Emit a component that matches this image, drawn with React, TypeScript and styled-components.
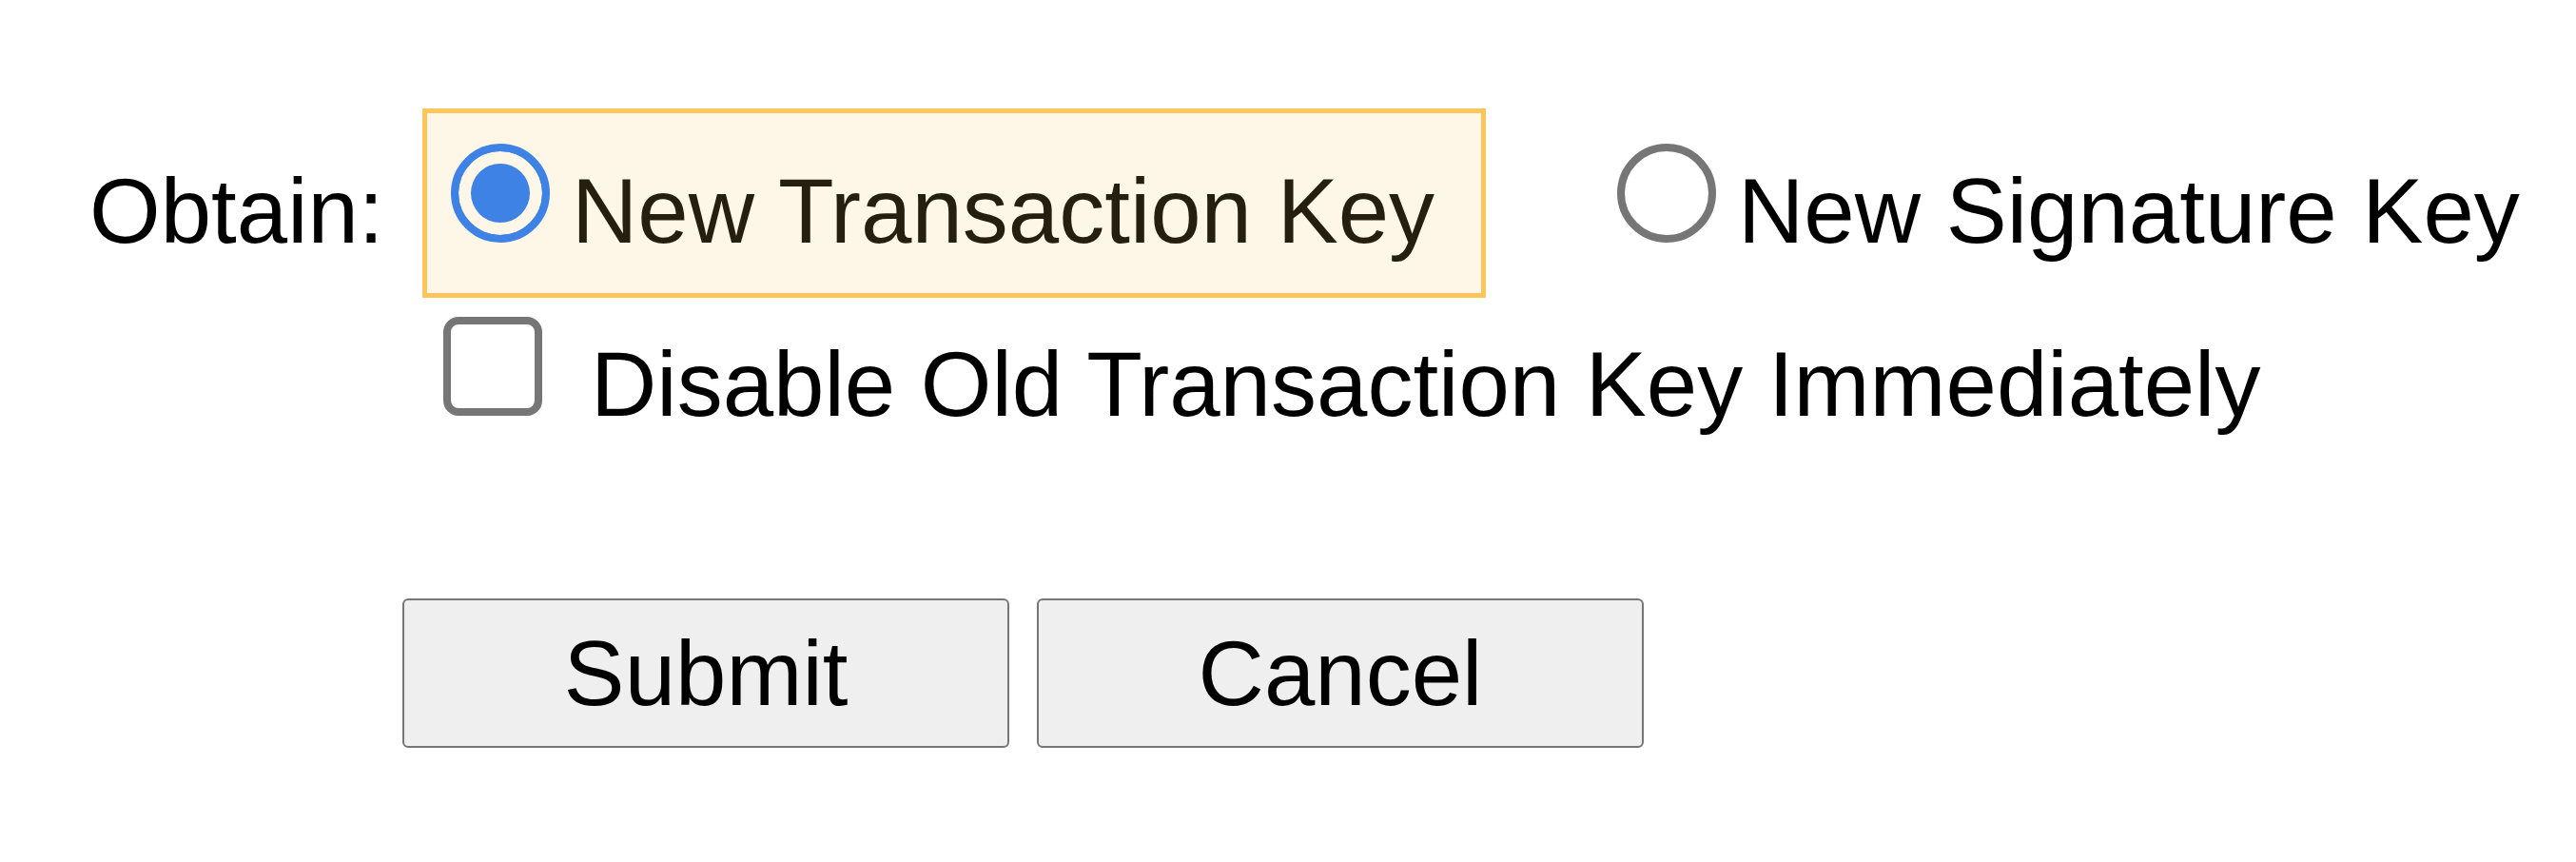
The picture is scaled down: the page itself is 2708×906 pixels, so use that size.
import React from "react";
import styled, { createGlobalStyle } from "styled-components";

const GlobalStyle = createGlobalStyle`
  html, body {
    margin: 0;
    padding: 0;
    background: #ffffff;
  }
  body {
    font-family: "Liberation Sans", Arial, Helvetica, sans-serif;
    font-size: 96px;
    color: #000000;
  }
`;

const Form = styled.form`
  display: block;
  padding-top: 114px;
`;

const ObtainRow = styled.div`
  display: flex;
  align-items: baseline;
  padding-left: 94px;
`;

const FieldLabel = styled.span`
  flex: 0 0 350px;
  line-height: normal;
`;

const Choice = styled.label<{ $selected?: boolean; $offset?: number }>`
  display: block;
  box-sizing: border-box;
  line-height: normal;
  white-space: nowrap;
  cursor: pointer;
  margin-left: ${(p) => p.$offset ?? 0}px;
  ${(p) =>
    p.$selected
      ? `
    width: 1118px;
    height: 199px;
    padding: 32px 0 0 25px;
    border: 5px solid #fec55a;
    background: #fef7e8;
    color: #261f10;
  `
      : `
    padding: 0;
    color: #000000;
  `}
`;

const RadioMark = styled.span<{ $checked?: boolean }>`
  display: inline-block;
  box-sizing: border-box;
  width: 104px;
  height: 104px;
  margin: 0 23px 0 0;
  vertical-align: baseline;
  border-radius: 50%;
  border: 8px solid ${(p) => (p.$checked ? "#3e82e6" : "#767676")};
  background: ${(p) => (p.$checked ? "#3e82e6" : "#ffffff")};
  box-shadow: ${(p) => (p.$checked ? "inset 0 0 0 13px #fef7e8" : "none")};
`;

const OptionRow = styled.div`
  display: block;
  margin-top: 20px;
  padding-left: 466px;
  line-height: normal;
  white-space: nowrap;
`;

const CheckMark = styled.span`
  display: inline-block;
  box-sizing: border-box;
  width: 104px;
  height: 104px;
  margin: 0 51px 0 0;
  vertical-align: baseline;
  border: 8px solid #767676;
  border-radius: 16px;
  background: #ffffff;
`;

const ButtonRow = styled.div`
  display: flex;
  gap: 29px;
  margin-top: 170px;
  padding-left: 423px;
`;

const ActionButton = styled.button`
  box-sizing: border-box;
  width: 638px;
  height: 157px;
  padding: 0;
  margin: 0;
  border: 2px solid #767676;
  border-radius: 6px;
  background: #efefef;
  color: #000000;
  font-family: "Liberation Sans", Arial, Helvetica, sans-serif;
  font-size: 96px;
  line-height: normal;
  display: flex;
  align-items: center;
  justify-content: center;
  cursor: pointer;
`;

export default function App() {
  return (
    <>
      <GlobalStyle />
      <Form onSubmit={(e) => e.preventDefault()}>
        <ObtainRow>
          <FieldLabel>Obtain:</FieldLabel>
          <Choice $selected>
            <RadioMark $checked role="radio" aria-checked="true" />
            New Transaction Key
          </Choice>
          <Choice $offset={138}>
            <RadioMark role="radio" aria-checked="false" />
            New Signature Key
          </Choice>
        </ObtainRow>
        <OptionRow>
          <CheckMark role="checkbox" aria-checked="false" />
          Disable Old Transaction Key Immediately
        </OptionRow>
        <ButtonRow>
          <ActionButton type="submit">Submit</ActionButton>
          <ActionButton type="button">Cancel</ActionButton>
        </ButtonRow>
      </Form>
    </>
  );
}
